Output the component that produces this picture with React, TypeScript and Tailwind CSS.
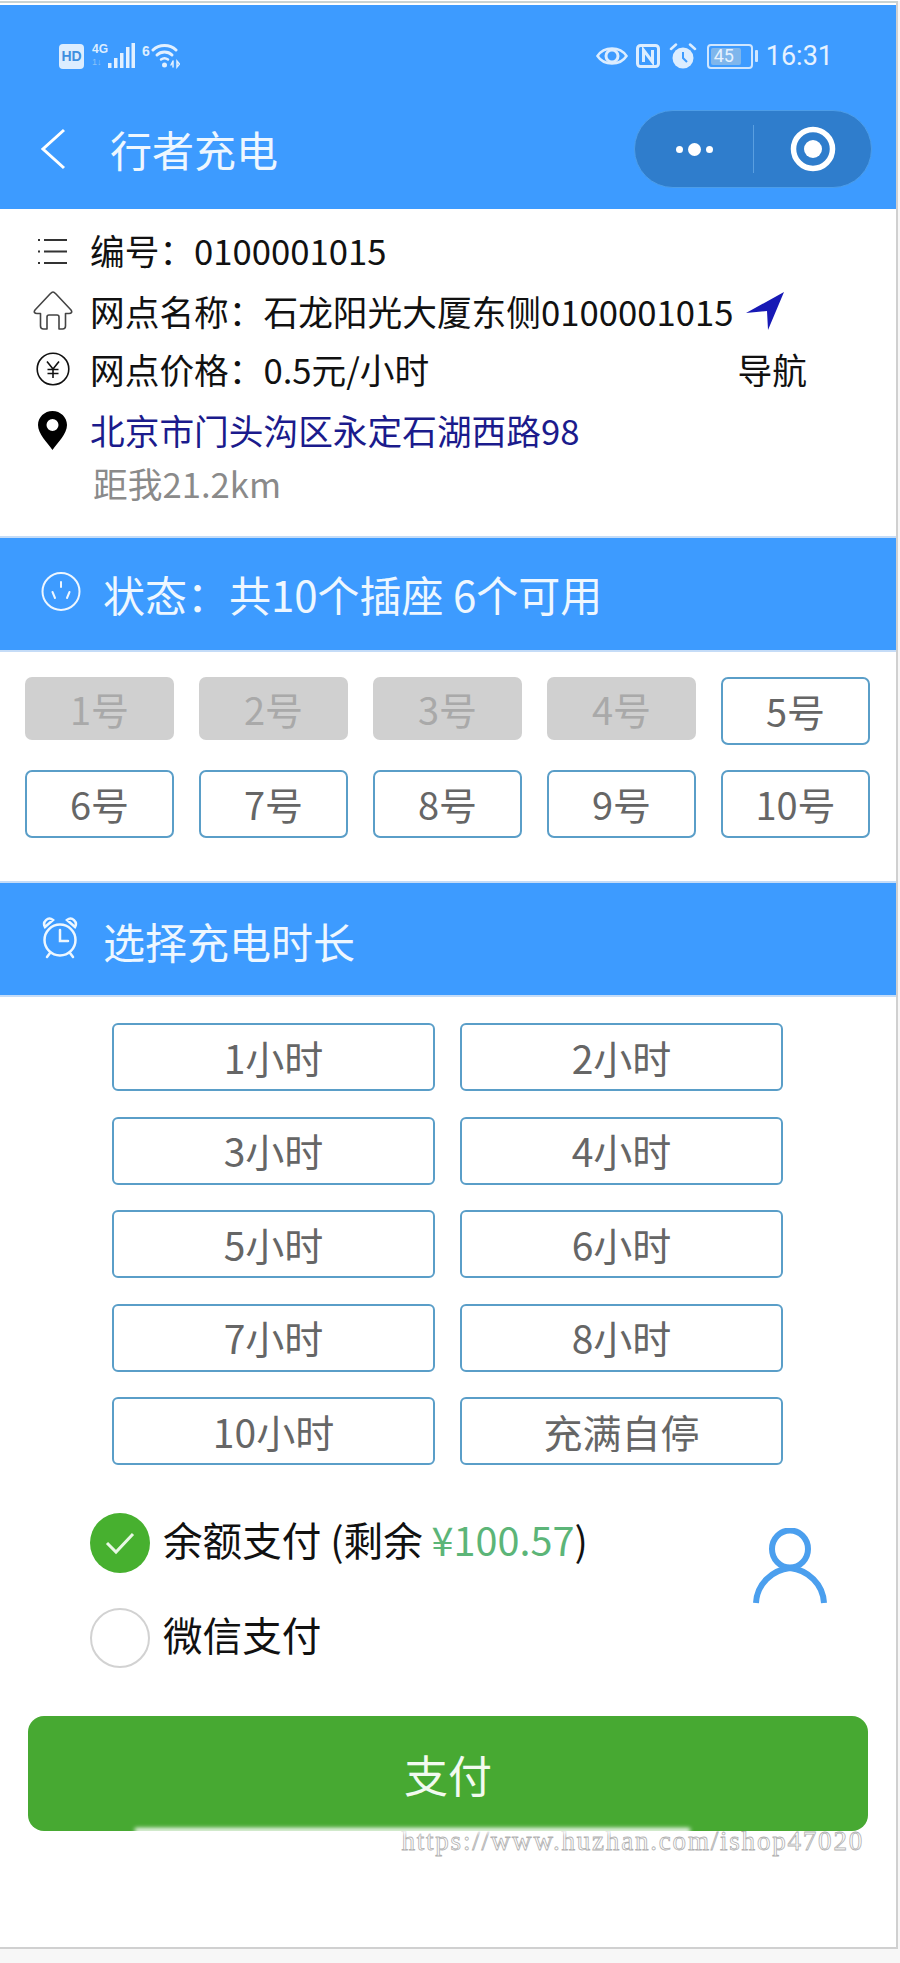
import React from "react";

const cjk = "font-['Noto_Sans_CJK_SC','Noto_Sans',sans-serif]";

function Wifi() {
  return (
    <svg width="29" height="26" viewBox="0 0 29 26" fill="none" stroke="#e2f0ff" strokeLinecap="round">
      <path d="M2 7 C8 1 19 1 25 7" strokeWidth="3" />
      <path d="M6 12 C10 8 17 8 21 12" strokeWidth="3" />
      <path d="M10 16.5 C12 15 15 15 17 16.5" strokeWidth="2.5" />
      <circle cx="13.5" cy="22" r="2.5" fill="#e2f0ff" stroke="none" />
      <path d="M22 18 v6 M20 22 l2 -4 M26 18 v6 l2.5 -3 z" strokeWidth="1.5" />
    </svg>
  );
}

function Bars() {
  return (
    <svg width="28" height="26" viewBox="0 0 28 26" fill="#e2f0ff">
      <rect x="1" y="20" width="3.5" height="5" />
      <rect x="7" y="15" width="3.5" height="10" />
      <rect x="13" y="10" width="3.5" height="15" />
      <rect x="19" y="4" width="3.5" height="21" />
      <rect x="24.5" y="0" width="3.5" height="25" />
    </svg>
  );
}

function Eye() {
  return (
    <svg width="32" height="22" viewBox="0 0 32 22" fill="none" stroke="#dcedff">
      <path d="M1.5 11 C8 1 24 1 30.5 11 C24 21 8 21 1.5 11 Z" strokeWidth="2.5" />
      <circle cx="16" cy="11" r="6" strokeWidth="3" />
    </svg>
  );
}

function Nfc() {
  return (
    <svg width="24" height="24" viewBox="0 0 24 24" fill="none" stroke="#dcedff">
      <rect x="1.5" y="1.5" width="21" height="21" rx="3" strokeWidth="3" />
      <path d="M7.5 18 V6 L16.5 18 V6" strokeWidth="3" />
    </svg>
  );
}

function Alarm() {
  return (
    <svg width="28" height="26" viewBox="0 0 28 26" fill="none">
      <circle cx="14" cy="15" r="10.5" fill="#dcedff" />
      <path d="M14 9 V15 L18 19" stroke="#3d9bff" strokeWidth="2" />
      <path d="M2 6 L7 1.5 M26 6 L21 1.5" stroke="#dcedff" strokeWidth="2.5" strokeLinecap="round" />
    </svg>
  );
}

function HouseIcon() {
  return (
    <svg width="40" height="39" viewBox="0 0 40 39" fill="none" stroke="#444" strokeWidth="1.6" strokeLinejoin="round">
      <path d="M20 1 C21 1 22 2 23 3 L38 19 C39.5 21 38.5 22.5 36 22.5 H32.5 V35 C32.5 37 31.5 38 29.5 38 H26 V26 C26 24.5 25 24 24 24 H16 C15 24 14 24.5 14 26 V38 H10.5 C8.5 38 7.5 37 7.5 35 V22.5 H4 C1.5 22.5 0.5 21 2 19 L17 3 C18 2 19 1 20 1 Z" />
    </svg>
  );
}

function YenIcon() {
  return (
    <svg width="34" height="34" viewBox="0 0 34 34" fill="none" stroke="#111" strokeWidth="1.6">
      <circle cx="17" cy="17" r="15.8" />
      <path d="M11 9.5 L17 17 L23 9.5 M17 17 V26 M11.5 17.5 H22.5 M11.5 21.5 H22.5" />
    </svg>
  );
}

function PinIcon() {
  return (
    <svg width="29" height="39" viewBox="0 0 29 39">
      <path
        fillRule="evenodd"
        fill="#000"
        d="M14.5 0 C6.5 0 0 6.3 0 14 C0 23 9 31 14.5 39 C20 31 29 23 29 14 C29 6.3 22.500 0 14.5 0 Z M14.5 8 A6 6 0 1 1 14.5 20 A6 6 0 1 1 14.500 8 Z"
      />
    </svg>
  );
}

function SocketButton({ label, off }: { label: string; off?: boolean }) {
  return off ? (
    <div className="h-[63px] w-[149px] rounded-[7px] bg-[#d0d0d0] flex items-center justify-center text-[38px] leading-none text-[#a9a9a9]">
      {label}
    </div>
  ) : (
    <div className="h-[68px] w-[149px] rounded-[7px] border-2 border-[#5a9ec8] bg-white flex items-center justify-center text-[38px] leading-none text-[#666]">
      {label}
    </div>
  );
}

function HourButton({ label }: { label: string }) {
  return (
    <div className="h-[68px] rounded-[6px] border-2 border-[#5a9ec8] bg-white flex items-center justify-center text-[39px] leading-none text-[#666]">
      {label}
    </div>
  );
}

export default function App() {
  return (
    <div className={`w-[900px] h-[1963px] bg-[#f7f7f7] ${cjk}`}>
      <div className="w-[898px] h-[1948px] border-t-2 border-t-[#c9d3d3] border-r-2 border-r-[#d0d0d0] border-b-2 border-b-[#d0d0d0] bg-white pt-[2px] mt-[1px]">
        <header className="h-[204px] bg-[#3d9bff] pl-[40px] pr-[24px] pt-[38px]">
          <div className="h-[26px] flex items-center">
            <div className="ml-[19px] w-[25px] h-[25px] rounded-[4px] bg-[#dcedff] flex items-center justify-center text-[14px] font-bold text-[#3d8fe0] font-['Liberation_Sans',sans-serif]">
              HD
            </div>
            <div className="ml-[8px] w-[16px] h-[26px] flex flex-col font-['Liberation_Sans',sans-serif]">
              <span className="text-[12px] leading-[13px] font-bold text-[#dcedff]">4G</span>
              <span className="text-[9px] leading-[12px] text-[#8cc2f7]">1↓</span>
            </div>
            <div className="-ml-[1px]">
              <Bars />
            </div>
            <span className="ml-[7px] self-start text-[14px] leading-[16px] font-bold text-[#dcedff] font-['Liberation_Sans',sans-serif]">
              6
            </span>
            <div className="ml-[1px]">
              <Wifi />
            </div>
            <div className="ml-auto flex items-center mr-[39px]">
              <Eye />
              <div className="ml-[8px]">
                <Nfc />
              </div>
              <div className="ml-[9px]">
                <Alarm />
              </div>
              <div className="ml-[10px] w-[46px] h-[25px] rounded-[4px] border-2 border-[#cfe6ff] p-[2px] flex">
                <div className="w-[30px] bg-[#7fb6ec] rounded-[2px] flex items-center text-[18px] leading-none text-[#e6f2ff] font-['Roboto',sans-serif] pl-[3px]">
                  45
                </div>
              </div>
              <div className="ml-[2px] w-[3px] h-[12px] rounded-[1px] bg-[#cfe6ff]" />
              <span className="ml-[8px] text-[27px] leading-none text-[#e6f2ff] font-['Roboto',sans-serif]">
                16:31
              </span>
            </div>
          </div>
          <div className="flex items-center h-[78px] mt-[41px]">
            <svg width="26" height="42" viewBox="0 0 26 42" fill="none" stroke="#ffffff" strokeWidth="3" className="shrink-0">
              <path d="M24 2 L3 21 L24 40" />
            </svg>
            <span className="ml-[44px] text-[42px] leading-none text-[#eef7ff]">行者充电</span>
            <div className="ml-auto w-[238px] h-[78px] rounded-full bg-[#2f7dcc] border border-[#4d9de8] flex items-center">
              <div className="w-[118px] flex items-center justify-center gap-[5px]">
                <span className="w-[7px] h-[7px] rounded-full bg-white" />
                <span className="w-[13px] h-[13px] rounded-full bg-white" />
                <span className="w-[7px] h-[7px] rounded-full bg-white" />
              </div>
              <div className="w-[1px] h-[48px] bg-[#5a9fe0]" />
              <div className="flex-1 flex items-center justify-center">
                <svg width="46" height="46" viewBox="0 0 46 46">
                  <circle cx="23" cy="23" r="19.500" fill="none" stroke="#ffffff" strokeWidth="5.500" />
                  <circle cx="23" cy="23" r="9" fill="#ffffff" />
                </svg>
              </div>
            </div>
          </div>
        </header>

        <section className="h-[327px] pt-[12px] text-[34.700px] leading-none text-[#111]">
          <div className="h-[58px] flex items-center">
            <div className="w-[90px] pl-[33px] pt-[2px] shrink-0">
              <svg width="40" height="40" viewBox="0 0 40 40" fill="none" stroke="#333" strokeWidth="1.800">
                <path d="M11 9 H34 M11 20.500 H34 M11 32 H34" />
                <path d="M5 9 H7 M5 20.500 H7 M5 32 H7" strokeWidth="2" />
              </svg>
            </div>
            <span>编号：0100001015</span>
          </div>
          <div className="h-[64px] flex items-center">
            <div className="w-[90px] pl-[33px] -mt-[2px] shrink-0">
              <HouseIcon />
            </div>
            <span>网点名称：石龙阳光大厦东侧0100001015</span>
            <svg width="38" height="38" viewBox="0 0 38 38" className="ml-[13px] -mt-[1px] shrink-0">
              <path d="M38 0 L0 21 L21 19 L22 38 Z" fill="#1719b5" />
            </svg>
          </div>
          <div className="h-[52px] flex items-center pr-[89px]">
            <div className="w-[90px] pl-[36px] shrink-0">
              <YenIcon />
            </div>
            <span>网点价格：0.5元/小时</span>
            <span className="ml-auto">导航</span>
          </div>
          <div className="h-[70px] flex items-center">
            <div className="w-[90px] pl-[38px] shrink-0">
              <PinIcon />
            </div>
            <span className="text-[#1b1b8c]">北京市门头沟区永定石湖西路98</span>
          </div>
          <div className="h-[36px] pl-[93px] flex items-center text-[#8a8a8a]">距我21.2km</div>
        </section>

        <div className="h-[116px] bg-[#3d9bff] border-t-2 border-b-2 border-[#c5dcf7] flex items-center pl-[41px] text-[#eef7ff]">
          <svg width="40" height="41" viewBox="0 0 40 41" fill="none" stroke="#eef7ff" strokeWidth="2" className="-mt-[6px] shrink-0">
            <circle cx="20" cy="20.500" r="18.500" />
            <path d="M20 11 V16 M11.500 21 L14 27 M28.500 21 L26 27" strokeLinecap="round" />
          </svg>
          <span className="ml-[22px] text-[42px] leading-none">状态：共10个插座 6个可用</span>
        </div>

        <div className="h-[229px] pt-[25px] pl-[25px]">
          <div className="grid grid-cols-[repeat(5,149px)] gap-x-[25px] gap-y-[25px] items-start">
            <SocketButton label="1号" off />
            <SocketButton label="2号" off />
            <SocketButton label="3号" off />
            <SocketButton label="4号" off />
            <SocketButton label="5号" />
            <SocketButton label="6号" />
            <SocketButton label="7号" />
            <SocketButton label="8号" />
            <SocketButton label="9号" />
            <SocketButton label="10号" />
          </div>
        </div>

        <div className="h-[116px] bg-[#3d9bff] border-t-2 border-b-2 border-[#c5dcf7] flex items-center pl-[42px] text-[#eef7ff]">
          <svg width="36" height="43" viewBox="0 0 36 43" fill="none" stroke="#eef7ff" strokeWidth="2.500" strokeLinecap="round" className="-mt-[3px] shrink-0">
            <circle cx="18" cy="24" r="15.500" />
            <path d="M18 14 V25 H26" />
            <path d="M3 11 C0 6 6 0 11 4 Z M33 11 C36 6 30 0 25 4 Z" />
            <path d="M8 37 L5 41 M28 37 L31 41" />
          </svg>
          <span className="ml-[25px] mt-[4px] text-[42px] leading-none">选择充电时长</span>
        </div>

        <div className="pt-[26px] px-[112px]">
          <div className="w-[671px] grid grid-cols-[323px_323px] gap-x-[25px] gap-y-[25.500px]">
            {["1小时", "2小时", "3小时", "4小时", "5小时", "6小时", "7小时", "8小时", "10小时", "充满自停"].map((t) => (
              <HourButton key={t} label={t} />
            ))}
          </div>
        </div>

        <div className="mt-[48px] pl-[90px] pr-[69px] flex items-start">
          <div className="flex flex-col gap-[35px]">
            <div className="flex items-center">
              <div className="w-[60px] h-[60px] rounded-full bg-[#47b02f] flex items-center justify-center">
                <svg width="30" height="24" viewBox="0 0 30 24" fill="none" stroke="#e8f8e4" strokeWidth="3">
                  <path d="M2 12 L11 21 L28 3" />
                </svg>
              </div>
              <span className="ml-[13px] -mt-[9px] text-[39.600px] leading-none text-[#111]">
                余额支付 (剩余 <span className="text-[#5cb578]">¥100.57</span>)
              </span>
            </div>
            <div className="flex items-center">
              <div className="w-[60px] h-[60px] rounded-full bg-white border-2 border-[#d2d2d2]" />
              <span className="ml-[13px] -mt-[9px] text-[39.600px] leading-none text-[#111]">微信支付</span>
            </div>
          </div>
          <svg width="74" height="76" viewBox="0 0 74 76" fill="none" stroke="#4b9fee" strokeWidth="6" className="ml-auto mt-[15px] shrink-0">
            <ellipse cx="37" cy="21" rx="18" ry="18.500" />
            <path d="M3 75 C4 56 19 42 37 40 C55 42 70 56 71 75" />
          </svg>
        </div>

        <div className="relative mt-[48px] mx-[28px] h-[115px] rounded-[16px] bg-[#47a932] flex items-center justify-center text-[44px] leading-none text-[#f2faf0]">
          支付
          <div className="absolute -bottom-[2px] left-[107px] w-[555px] h-[5px] bg-white blur-[2px]" />
        </div>

        <div className="-mt-[5px] pr-[32px] text-right text-[27px] leading-[30px] tracking-[1.800px] text-white [-webkit-text-stroke:0.8px_#b0b0b0] font-['Liberation_Serif',serif]">
          https://www.huzhan.com/ishop47020
        </div>
      </div>
    </div>
  );
}
